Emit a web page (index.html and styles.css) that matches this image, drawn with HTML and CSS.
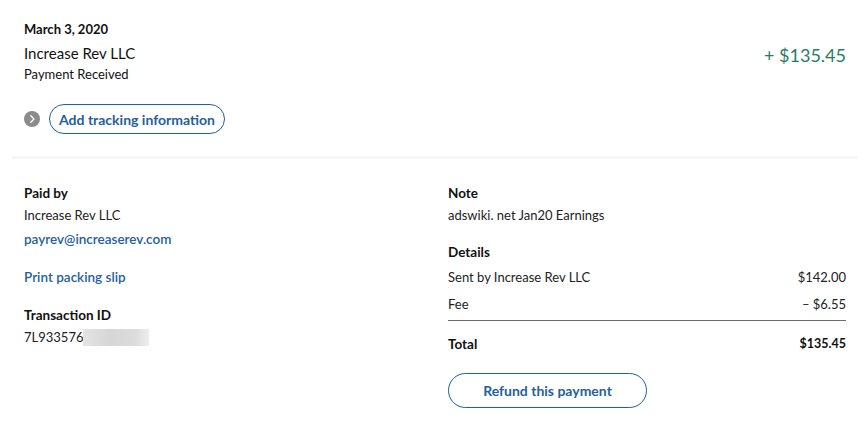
FILE: index.html
```html
<!DOCTYPE html>
<html>
<head>
<meta charset="utf-8">
<link rel="stylesheet" href="styles.css">
</head>
<body>
<div class="page">
  <section class="top">
    <div class="summary">
      <div class="info">
        <div class="date">March 3, 2020</div>
        <div class="name">Increase Rev LLC</div>
        <div class="status">Payment Received</div>
      </div>
      <div class="amount">+ $135.45</div>
    </div>
    <div class="tracking">
      <span class="chev"><svg width="16" height="16" viewBox="0 0 16 16"><circle cx="8" cy="8" r="8" fill="#8c8c8c"/><path d="M6.8 4.8 L10 8 L6.8 11.2" fill="none" stroke="#fff" stroke-width="1.4" stroke-linecap="round" stroke-linejoin="round"/></svg></span>
      <button class="pill small">Add tracking information</button>
    </div>
  </section>
  <div class="divider"></div>
  <section class="details">
    <div class="col left">
      <div class="label">Paid by</div>
      <div class="text g4">Increase Rev LLC</div>
      <div class="link g6">payrev@increaserev.com</div>
      <div class="link g20">Print packing slip</div>
      <div class="label g20">Transaction ID</div>
      <div class="text g4">7L933576<span class="blur"></span></div>
    </div>
    <div class="col right">
      <div class="label">Note</div>
      <div class="text g4">adswiki. net Jan20 Earnings</div>
      <div class="label g19">Details</div>
      <div class="row g7"><span>Sent by Increase Rev LLC</span><span>$142.00</span></div>
      <div class="row g9"><span>Fee</span><span>– $6.55</span></div>
      <div class="rule"></div>
      <div class="row total"><span class="tl">Total</span><span>$135.45</span></div>
      <button class="pill big">Refund this payment</button>
    </div>
  </section>
</div>
</body>
</html>
```

FILE: styles.css
```css
html, body {
  margin: 0;
  padding: 0;
  background: #fff;
}
body {
  font-family: Lato, "Open Sans", "Noto Sans", sans-serif;
  color: #2c2e2f;
  font-size: 13px;
}
.page {
  width: 864px;
  height: 432px;
}
.top {
  padding: 20px 18px 0 24px;
}
.summary {
  display: flex;
  justify-content: space-between;
  align-items: flex-start;
}
.date {
  font-weight: 700;
  font-size: 13px;
  line-height: 18px;
  color: #111;
}
.name {
  margin-top: 5px;
  font-size: 15px;
  line-height: 20px;
  color: #111;
}
.status {
  margin-top: 2px;
  font-size: 13px;
  line-height: 18px;
  color: #111;
}
.amount {
  margin-top: 24px;
  font-size: 18px;
  line-height: 22px;
  color: #2a7c62;
}
.tracking {
  margin-top: 21px;
  display: flex;
  align-items: center;
  gap: 9px;
}
.chev {
  display: flex;
  width: 16px;
  height: 16px;
}
.pill {
  font-family: inherit;
  background: #fff;
  border: 1px solid #1d5f9f;
  border-radius: 999px;
  color: #24609e;
  font-weight: 700;
  font-size: 14px;
  padding: 0;
  cursor: pointer;
}
.pill.small {
  width: 176px;
  height: 30px;
}
.pill.big {
  width: 199px;
  height: 35px;
  margin-top: 20px;
}
.divider {
  margin: 22px 6px 0 12px;
  height: 3px;
  background: #f6f6f6;
}
.details {
  display: grid;
  grid-template-columns: 424px 398px;
  padding: 25px 0 0 24px;
}
.label {
  font-weight: 700;
  font-size: 13.5px;
  line-height: 18px;
  color: #111;
}
.text {
  line-height: 18px;
  color: #222;
}
.link {
  line-height: 18px;
  font-size: 13.5px;
  color: #24609e;
  font-weight: 600;
}
.g4 { margin-top: 4px; }
.g6 { margin-top: 6px; }
.g7 { margin-top: 7px; }
.g9 { margin-top: 9px; }
.g19 { margin-top: 19px; }
.g20 { margin-top: 20px; }
.blur {
  display: inline-block;
  width: 66px;
  height: 17px;
  vertical-align: -4px;
  background: linear-gradient(90deg, #e4e4e4, #d6d6d6 40%, #dcdcdc 80%, #eeeeee);
}
.row {
  display: flex;
  justify-content: space-between;
  line-height: 18px;
  color: #222;
}
.rule {
  margin-top: 7px;
  height: 1px;
  background: #6c6c6c;
}
.row.total {
  margin-top: 14px;
  font-weight: 700;
  font-size: 12.5px;
  color: #111;
}
.row.total .tl {
  font-size: 13.5px;
}
```
